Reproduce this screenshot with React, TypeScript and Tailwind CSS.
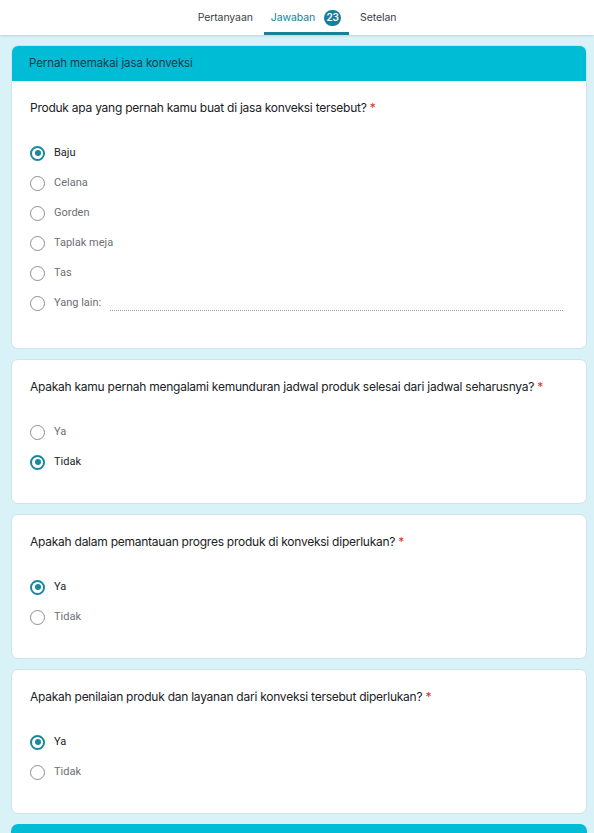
import React from "react";

type Q = {
  title: string;
  options: string[];
  selected: number;
  other?: boolean;
};

const questions: Q[] = [
  {
    title: "Produk apa yang pernah kamu buat di jasa konveksi tersebut?",
    options: ["Baju", "Celana", "Gorden", "Taplak meja", "Tas"],
    selected: 0,
    other: true,
  },
  {
    title: "Apakah kamu pernah mengalami kemunduran jadwal produk selesai dari jadwal seharusnya?",
    options: ["Ya", "Tidak"],
    selected: 1,
  },
  {
    title: "Apakah dalam pemantauan progres produk di konveksi diperlukan?",
    options: ["Ya", "Tidak"],
    selected: 0,
  },
  {
    title: "Apakah penilaian produk dan layanan dari konveksi tersebut diperlukan?",
    options: ["Ya", "Tidak"],
    selected: 0,
  },
];

const Radio = ({ checked }: { checked: boolean }) =>
  checked ? (
    <span className="flex h-[15px] w-[15px] shrink-0 items-center justify-center rounded-full border-2 border-[#1a879c]">
      <span className="h-[6px] w-[6px] rounded-full bg-[#1a879c]" />
    </span>
  ) : (
    <span className="h-[15px] w-[15px] shrink-0 rounded-full border border-[#8a8f94]" />
  );

const QuestionBody = ({ q, pb }: { q: Q; pb: string }) => (
  <div className={"px-[18px] pt-[18px] " + pb}>
    <div className="h-[18px] whitespace-nowrap text-[12px] leading-[18px] tracking-[-0.25px] text-[#202124] font-['Inter',sans-serif]">
      {q.title} <span className="text-[#d93025]">*</span>
    </div>
    <div className="mt-[21px] flex flex-col">
      {q.options.map((o, i) => (
        <div key={o} className="flex h-[30px] items-center gap-[9px]">
          <Radio checked={i === q.selected} />
          <span
            className={
              "text-[11px] font-['Roboto',sans-serif] " +
              (i === q.selected ? "text-[#202124]" : "text-[#6b7075]")
            }
          >
            {o}
          </span>
        </div>
      ))}
      {q.other && (
        <div className="flex h-[30px] items-center gap-[9px]">
          <Radio checked={false} />
          <span className="text-[11px] text-[#6b7075] font-['Roboto',sans-serif]">Yang lain:</span>
          <span className="mr-[5px] mt-[14px] flex-1 border-b border-dotted border-[#9aa0a6]" />
        </div>
      )}
    </div>
  </div>
);

export default function App() {
  return (
    <div className="flex h-[833px] flex-col overflow-hidden bg-[#d8f2f8] font-['Inter',sans-serif]">
      <div className="relative z-10 flex h-[35px] shrink-0 items-end justify-center gap-[11px] bg-white shadow-[0_1px_2px_rgba(0,0,0,0.12)] text-[10.5px] tracking-[-0.1px]">
        <div className="flex h-full items-center text-[#3c4043]">Pertanyaan</div>
        <div className="flex h-full items-center gap-[9px] border-b-[3px] border-[#1a7f99] pl-[7px] pr-[8px] pt-[3px] text-[#1a7f99]">
          <span>Jawaban</span>
          <span className="flex h-[16px] w-[17px] items-center justify-center rounded-full bg-[#15809a] text-[10px] font-semibold text-white">
            23
          </span>
        </div>
        <div className="flex h-full items-center text-[#3c4043]">Setelan</div>
      </div>

      <div className="flex flex-col gap-[10px] pl-[11px] pr-[7px] pt-[10px]">
        <div className="overflow-hidden rounded-[7px] border border-[#cfe3e8] bg-white">
          <div className="flex h-[35px] items-center bg-[#00bcd5] px-[17px] text-[11.5px] tracking-[-0.1px] text-[#1d3a42]">
            Pernah memakai jasa konveksi
          </div>
          <QuestionBody q={questions[0]} pb="pb-[30px]" />
        </div>
        {questions.slice(1).map((q) => (
          <div key={q.title} className="rounded-[7px] border border-[#cfe3e8] bg-white">
            <QuestionBody q={q} pb="pb-[26px]" />
          </div>
        ))}
        <div className="h-[40px] rounded-t-[7px] bg-[#00bcd5]" />
      </div>
    </div>
  );
}
